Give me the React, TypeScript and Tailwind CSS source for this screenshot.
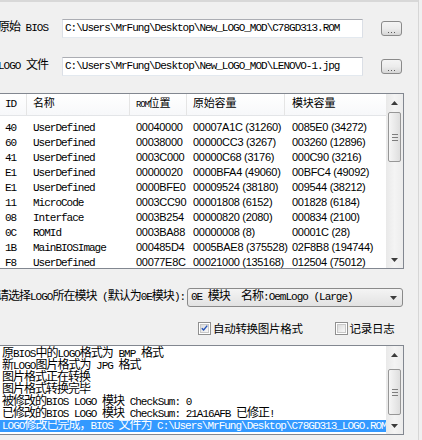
import React from "react";

const MONO = "font-['Liberation_Mono',monospace] text-[11px] tracking-[-1px]";
const CJK = "font-['Noto_Sans_CJK_SC',sans-serif] text-[12px] tracking-[-1px] leading-[8px]";
const CJK_UI = "font-['Noto_Sans_CJK_SC',sans-serif] text-[11.5px] tracking-[-0.3px]";
const NUM = "font-['Liberation_Sans',sans-serif] text-[11px] tracking-[-0.3px]";
const HDR_CJK = "font-['Noto_Sans_CJK_SC',sans-serif] text-[11px] tracking-[-0.2px] leading-[8px]";

function Mixed({ text, cjk = CJK, ascii = MONO }: { text: string; cjk?: string; ascii?: string }) {
  const runs: [string, boolean][] = [];
  let cur = "";
  let curCjk: boolean | null = null;
  for (const ch of Array.from(text)) {
    const c = /[\u2E80-\u9FFF\uFF00-\uFFEF\u3000-\u303F]/.test(ch);
    if (curCjk === null || c === curCjk) {
      cur += ch;
      curCjk = c;
    } else {
      runs.push([cur, curCjk]);
      cur = ch;
      curCjk = c;
    }
  }
  if (cur) runs.push([cur, !!curCjk]);
  return (
    <>
      {runs.map(([t, c], i) => (
        <span key={i} className={c ? cjk : ascii}>
          {t}
        </span>
      ))}
    </>
  );
}

function Arrow({ up }: { up?: boolean }) {
  return (
    <svg width="7" height="4" viewBox="0 0 7 4">
      {up ? <polygon points="0,4 3.5,0 7,4" fill="#3c3c3c" /> : <polygon points="0,0 7,0 3.5,4" fill="#3c3c3c" />}
    </svg>
  );
}

function VScroll({ thumbTop, thumbH }: { thumbTop: number; thumbH: number }) {
  return (
    <div className="w-[17px] shrink-0 flex flex-col bg-gradient-to-r from-[#e9e9e9] via-[#f4f4f4] to-[#ececec]">
      <div className="h-[17px] flex items-center justify-center">
        <Arrow up />
      </div>
      <div className="flex-1 flex flex-col">
        <div style={{ height: thumbTop }} />
        <div
          style={{ height: thumbH }}
          className="mx-[2px] border border-[#979797] rounded-[2px] bg-gradient-to-r from-[#f6f6f6] to-[#dedede] flex flex-col items-center justify-center gap-[2px]"
        >
          <div className="w-[6px] h-px bg-[#7d7d7d]" />
          <div className="w-[6px] h-px bg-[#7d7d7d]" />
          <div className="w-[6px] h-px bg-[#7d7d7d]" />
        </div>
      </div>
      <div className="h-[17px] flex items-center justify-center">
        <Arrow />
      </div>
    </div>
  );
}

function Checkbox({ checked }: { checked?: boolean }) {
  return (
    <div className="w-[13px] h-[13px] border border-[#8f8f8f] bg-white p-[1px] shrink-0">
      <div className="w-full h-full border border-[#c8c8c8] bg-gradient-to-br from-[#dcdcdc] to-[#f8f8f8] flex items-center justify-center">
        {checked && (
          <svg width="9" height="8" viewBox="0 0 9 8">
            <path d="M1 4.2 L3.4 6.6 L8 1" stroke="#2453b8" strokeWidth="1.8" fill="none" />
          </svg>
        )}
      </div>
    </div>
  );
}

function DotsButton() {
  return (
    <div className="ml-[18px] w-[21px] h-[15px] shrink-0 border border-[#8a8a8a] rounded-[3px] bg-gradient-to-b from-[#f4f4f4] via-[#ececec] to-[#d6d6d6] flex items-end justify-center pb-[2px]">
      <div className="flex gap-[2px]">
        <div className="w-px h-px bg-[#5a5a5a]" />
        <div className="w-px h-px bg-[#5a5a5a]" />
        <div className="w-px h-px bg-[#5a5a5a]" />
      </div>
    </div>
  );
}

function PathRow({ label, path, mt }: { label: string; path: string; mt: string }) {
  return (
    <div className={`flex items-center h-[19px] ${mt}`}>
      <div className={`w-[48px] shrink-0 flex justify-end whitespace-pre leading-[19px] text-black ${MONO}`}>
        <span>
          <Mixed text={label} />
        </span>
      </div>
      <div
        className={`ml-[14px] w-[301px] h-[19px] shrink-0 border border-[#abadb3] border-l-[#dbdfe6] border-r-[#dbdfe6] border-b-[#e3e9ef] bg-white pl-[2px] flex items-center whitespace-pre leading-[17px] text-black overflow-hidden ${MONO}`}
      >
        <Mixed text={path} />
      </div>
      <DotsButton />
    </div>
  );
}

const rows: string[][] = [
  ["40", "UserDefined", "00040000", "00007A1C (31260)", "0085E0 (34272)"],
  ["60", "UserDefined", "00038000", "00000CC3 (3267)", "003260 (12896)"],
  ["41", "UserDefined", "0003C000", "00000C68 (3176)", "000C90 (3216)"],
  ["E1", "UserDefined", "00000020", "0000BFA4 (49060)", "00BFC4 (49092)"],
  ["E1", "UserDefined", "0000BFE0", "00009524 (38180)", "009544 (38212)"],
  ["11", "MicroCode", "0003CC90", "00001808 (6152)", "001828 (6184)"],
  ["08", "Interface", "0003B254", "00000820 (2080)", "000834 (2100)"],
  ["0C", "ROMId", "0003BA88", "00000008 (8)", "00001C (28)"],
  ["1B", "MainBIOSImage", "000485D4", "0005BAE8 (375528)", "02F8B8 (194744)"],
  ["F8", "UserDefined", "00077E8C", "00021000 (135168)", "012504 (75012)"],
];

const logLines = [
  "原BIOS中的LOGO格式为 BMP 格式",
  "新LOGO图片格式为 JPG 格式",
  "图片格式正在转换",
  "图片格式转换完毕",
  "被修改的BIOS LOGO 模块 CheckSum: 0",
  "已修改的BIOS LOGO 模块 CheckSum: 21A16AFB 已修正!",
];

export default function App() {
  return (
    <div className="w-[422px] h-[440px] bg-[#f0f0f0] overflow-hidden flex text-black">
      <div className="w-[418px] shrink-0 flex flex-col">
        <div className="h-[2px] bg-[#d8d8d8]" />
        <PathRow label="原始 BIOS" path={"C:\\Users\\MrFung\\Desktop\\New_LOGO_MOD\\C78GD313.ROM"} mt="mt-[17px]" />
        <PathRow label="LOGO 文件" path={"C:\\Users\\MrFung\\Desktop\\New_LOGO_MOD\\LENOVO-1.jpg"} mt="mt-[19px]" />

        {/* list view */}
        <div className="mt-[17px] -ml-[2px] w-[406px] h-[176px] shrink-0 border border-[#828790] bg-white flex">
          <div className="flex-1 flex flex-col overflow-hidden">
            <div
              className={`h-[22px] shrink-0 flex border-b border-[#e3e5e8] bg-gradient-to-b from-white to-[#f7f8fa] leading-[21px] whitespace-pre ${MONO}`}
            >
              <div className="w-[28px] pl-[6px] border-r border-[#e5e5e5]">
                <Mixed text="ID" />
              </div>
              <div className="w-[103px] pl-[6px] border-r border-[#e5e5e5]">
                <Mixed text="名称" cjk={HDR_CJK} />
              </div>
              <div className="w-[57px] pl-[6px] border-r border-[#e5e5e5]">
                <Mixed text="ROM位置" cjk={HDR_CJK} ascii="font-['Liberation_Mono',monospace] text-[9px] tracking-[-1.2px]" />
              </div>
              <div className="w-[98px] pl-[6px] border-r border-[#e5e5e5]">
                <Mixed text="原始容量" cjk={HDR_CJK} />
              </div>
              <div className="flex-1 pl-[7px]">
                <Mixed text="模块容量" cjk={HDR_CJK} />
              </div>
            </div>
            <div className="pt-[2px] flex flex-col">
              {rows.map((r, i) => (
                <div key={i} className="h-[15px] flex leading-[15px] whitespace-pre">
                  <div className="w-[28px] pl-[6px]">
                    <span className={MONO}>{r[0]}</span>
                  </div>
                  <div className="w-[103px] pl-[6px]">
                    <span className={MONO}>{r[1]}</span>
                  </div>
                  <div className="w-[57px] pl-[6px]">
                    <span className={NUM}>{r[2]}</span>
                  </div>
                  <div className="w-[98px] pl-[6px]">
                    <span className={NUM}>{r[3]}</span>
                  </div>
                  <div className="flex-1 pl-[7px]">
                    <span className={NUM}>{r[4]}</span>
                  </div>
                </div>
              ))}
            </div>
          </div>
          <VScroll thumbTop={1} thumbH={50} />
        </div>

        {/* module select */}
        <div className="mt-[19px] w-[403px] h-[19px] flex items-center">
          <div className={`-ml-[3px] shrink-0 whitespace-pre leading-[19px] ${MONO}`}>
            <Mixed text="请选择LOGO所在模块 (默认为0E模块):" />
          </div>
          <div
            className={`ml-auto w-[216px] h-[19px] shrink-0 border border-[#8a8a8a] rounded-[3px] bg-gradient-to-b from-[#f4f4f4] to-[#e2e2e2] flex items-center pl-[3px] pr-[5px] whitespace-pre leading-[17px] ${MONO}`}
          >
            <span>
              <Mixed text="0E 模块  名称:OemLogo (Large)" />
            </span>
            <div className="ml-auto">
              <Arrow />
            </div>
          </div>
        </div>

        {/* checkboxes */}
        <div className="mt-[14px] h-[14px] flex items-center whitespace-nowrap">
          <div className="ml-[198px]">
            <Checkbox checked />
          </div>
          <span className={`ml-[2px] leading-[14px] ${CJK_UI}`}>自动转换图片格式</span>
          <div className="ml-[32px]">
            <Checkbox />
          </div>
          <span className={`ml-[2px] leading-[14px] ${CJK_UI}`}>记录日志</span>
        </div>

        {/* log */}
        <div className="mt-[10px] -ml-[1px] w-[405px] h-[90px] shrink-0 border border-[#828790] bg-white flex">
          <div className="flex-1 overflow-hidden pt-[2px] flex flex-col">
            {logLines.map((l, i) => (
              <div key={i} className={`h-[12px] leading-[12px] whitespace-pre pl-[2px] ${MONO}`}>
                <Mixed text={l} />
              </div>
            ))}
            <div className={`h-[12px] leading-[12px] whitespace-pre pl-[2px] bg-[#3399ff] text-white overflow-hidden ${MONO}`}>
              <Mixed text={"LOGO修改已完成，BIOS 文件为 C:\\Users\\MrFung\\Desktop\\C78GD313_LOGO.ROM"} />
            </div>
          </div>
          <VScroll thumbTop={6} thumbH={46} />
        </div>
      </div>
      <div className="w-px bg-[#d6d6d6]" />
      <div className="flex-1 bg-[#f0f0f0]" />
    </div>
  );
}
